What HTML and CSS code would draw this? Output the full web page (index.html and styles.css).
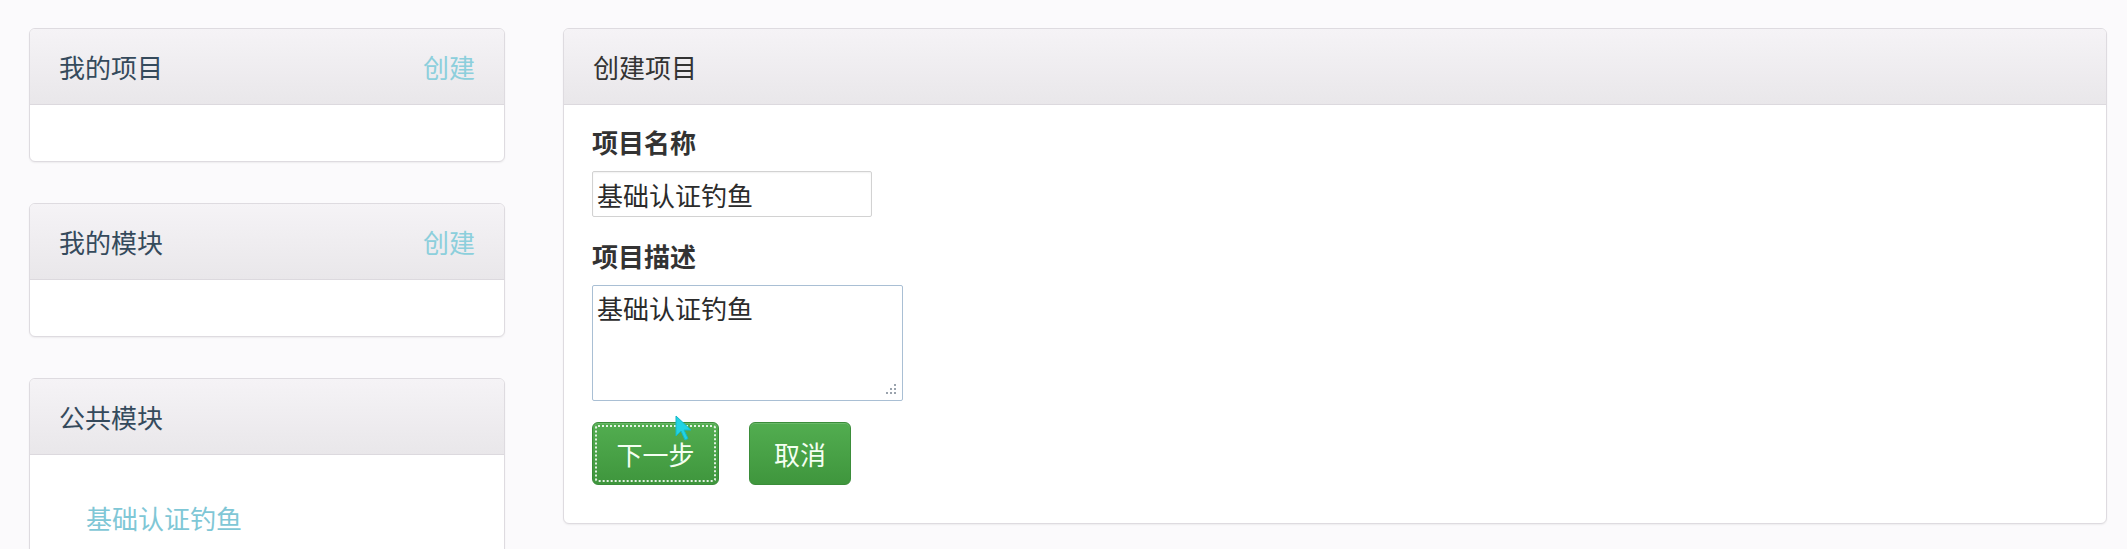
FILE: index.html
```html
<!DOCTYPE html>
<html lang="zh-CN">
<head>
<meta charset="utf-8">
<title>创建项目</title>
<link rel="stylesheet" href="styles.css">
</head>
<body>
<div class="page">
  <aside class="sidebar">
    <section class="panel">
      <div class="panel-heading">
        <span class="panel-title">我的项目</span>
        <a class="heading-link" href="#">创建</a>
      </div>
      <div class="panel-body"></div>
    </section>
    <section class="panel">
      <div class="panel-heading">
        <span class="panel-title">我的模块</span>
        <a class="heading-link" href="#">创建</a>
      </div>
      <div class="panel-body"></div>
    </section>
    <section class="panel panel-open">
      <div class="panel-heading">
        <span class="panel-title">公共模块</span>
      </div>
      <div class="panel-body list-body">
        <a class="module-link" href="#">基础认证钓鱼</a>
      </div>
    </section>
  </aside>

  <main class="content">
    <section class="panel">
      <div class="panel-heading">
        <span class="panel-title main-title">创建项目</span>
      </div>
      <form class="panel-body form-body">
        <label class="field-label" for="name">项目名称</label>
        <input class="text-input" id="name" type="text" value="基础认证钓鱼">
        <label class="field-label label-gap" for="desc">项目描述</label>
        <div class="textarea-wrap">
          <textarea class="text-area" id="desc">基础认证钓鱼</textarea>
          <svg class="grip" width="12" height="12" viewBox="0 0 12 12">
            <g fill="#9aa3ad">
              <rect x="9" y="1" width="2" height="2"/>
              <rect x="5" y="5" width="2" height="2"/><rect x="9" y="5" width="2" height="2"/>
              <rect x="1" y="9" width="2" height="2"/><rect x="5" y="9" width="2" height="2"/><rect x="9" y="9" width="2" height="2"/>
            </g>
          </svg>
        </div>
        <div class="actions">
          <button type="button" class="btn btn-next btn-focus">下一步</button>
          <button type="button" class="btn btn-cancel">取消</button>
          <svg class="cursor" width="18" height="26" viewBox="0 0 18 26">
            <path d="M1 1 L1 21 L6 16 L10 25 L13 23.5 L9 15 L16 15 Z" fill="#22d3e3" stroke="#14b8c8" stroke-width="1"/>
          </svg>
        </div>
      </form>
    </section>
  </main>
</div>
</body>
</html>
```
FILE: styles.css
```css
html, body {
  margin: 0;
  padding: 0;
}
body {
  background: #fbfafc;
  font-family: "Noto Sans CJK SC", "Noto Sans", sans-serif;
  font-size: 26px;
  color: #333;
  height: 549px;
  overflow: hidden;
}
.page {
  display: flex;
  align-items: flex-start;
  gap: 58px;
  padding: 28px 20px 0 29px;
}
.sidebar {
  width: 476px;
  flex: none;
  display: flex;
  flex-direction: column;
  gap: 41px;
}
.content {
  flex: 1;
}
.panel {
  background: #fff;
  border: 1px solid #dedbe0;
  border-radius: 6px;
  box-shadow: 0 1px 2px rgba(0, 0, 0, 0.06);
  overflow: hidden;
}
.panel-heading {
  height: 75px;
  padding: 0 29px;
  display: flex;
  align-items: center;
  justify-content: space-between;
  background: linear-gradient(#f5f3f6, #e9e7ea);
  border-bottom: 1px solid #dcd9de;
}
.panel-title {
  color: #354a5c;
  line-height: 36px;
}
.main-title {
  color: #333;
}
.heading-link {
  color: #8ccfdc;
  text-decoration: none;
  line-height: 36px;
}
.panel-body {
  padding: 28px;
}
.list-body {
  padding: 45px 28px 40px 56px;
}
.module-link {
  color: #7fc7d6;
  text-decoration: none;
  line-height: 36px;
  display: block;
}
.form-body {
  padding: 19px 28px 38px;
  display: flex;
  flex-direction: column;
  align-items: flex-start;
  margin: 0;
}
.field-label {
  font-weight: 700;
  line-height: 36px;
  color: #333;
  margin-bottom: 11px;
}
.label-gap {
  margin-top: 21px;
}
.text-input {
  width: 280px;
  height: 46px;
  box-sizing: border-box;
  border: 1px solid #d2d2d2;
  border-radius: 2px;
  box-shadow: inset 0 1px 2px rgba(0, 0, 0, 0.06);
  padding: 0 4px;
  font: inherit;
  font-size: 26px;
  color: #2b2b2b;
  background: #fff;
  margin: 0;
}
.textarea-wrap {
  position: relative;
  width: 311px;
  height: 116px;
}
.text-area {
  width: 100%;
  height: 100%;
  box-sizing: border-box;
  border: 1px solid #a9bfd4;
  border-radius: 2px;
  padding: 4px 4px;
  font: inherit;
  font-size: 26px;
  line-height: 36px;
  color: #2b2b2b;
  resize: none;
  margin: 0;
  outline: none;
  background: #fff;
}
.grip {
  position: absolute;
  right: 6px;
  bottom: 6px;
}
.actions {
  position: relative;
  display: flex;
  gap: 30px;
  margin-top: 21px;
}
.btn {
  height: 63px;
  box-sizing: border-box;
  padding: 0;
  white-space: nowrap;
  text-align: center;
  font: inherit;
  font-size: 26px;
  color: #f4fff2;
  background: linear-gradient(#52ad50, #3f963d);
  border: 1px solid #3b8d3a;
  border-radius: 6px;
  box-shadow: inset 0 1px 0 rgba(255, 255, 255, 0.15);
  cursor: pointer;
}
.btn-next {
  width: 127px;
}
.btn-cancel {
  width: 102px;
}
.btn-focus {
  outline: 2px dotted rgba(255, 255, 255, 0.85);
  outline-offset: -5px;
}
.cursor {
  position: absolute;
  left: 83px;
  top: -7px;
}
```
